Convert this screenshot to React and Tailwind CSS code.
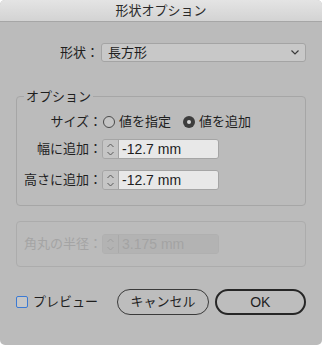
const font = { fontFamily: '"Liberation Sans", "Noto Sans CJK JP", sans-serif' };

const Stepper = ({ disabled }) => (
  <div
    className={`w-[16px] h-full flex items-center justify-center border-r ${
      disabled ? "bg-[#b3b3b3] border-[#a9a9a9]" : "bg-[#c5c5c5] border-[#a3a3a3]"
    }`}
  >
    <svg width="9" height="15" viewBox="0 0 9 15" fill="none">
      <path
        d="M1.5 5 L4.5 2 L7.5 5 M1.5 10 L4.5 13 L7.5 10"
        stroke={disabled ? "#a0a0a0" : "#5a5a5a"}
        strokeWidth="1"
      />
    </svg>
  </div>
);

const NumberField = ({ value, disabled }) => (
  <div
    className={`flex h-[20px] w-[117px] border rounded-[3px] overflow-hidden ${
      disabled ? "border-[#b0b0b0]" : "border-[#a5a5a5]"
    }`}
  >
    <Stepper disabled={disabled} />
    <div
      className={`flex-1 flex items-center pl-[3px] text-[14px] ${
        disabled ? "bg-[#b3b3b3] text-[#a3a3a3]" : "bg-[#e8e8e8] text-[#1e1e1e]"
      }`}
    >
      {value}
    </div>
  </div>
);

const Radio = ({ checked, label }) => (
  <label className="flex items-center gap-[4px]">
    {checked ? (
      <span className="w-[12px] h-[12px] rounded-full bg-[#3d3d3d] flex items-center justify-center">
        <span className="w-[4px] h-[4px] rounded-full bg-[#d6d6d6]" />
      </span>
    ) : (
      <span className="w-[12px] h-[12px] rounded-full border border-[#4a4a4a] bg-[#c4c4c4]" />
    )}
    <span>{label}</span>
  </label>
);

export default function App() {
  return (
    <div
      className="w-[322px] h-[345px] bg-[#bbbbbb] rounded-[5px] overflow-hidden flex flex-col text-[13px] text-[#1f1f1f]"
      style={font}
    >
      {/* タイトルバー */}
      <div className="h-[22px] shrink-0 bg-gradient-to-b from-[#e4e4e4] to-[#d3d3d3] border-b border-[#a6a6a6] flex items-center justify-center text-[13px] text-[#2a2a2a]">
        形状オプション
      </div>

      <div className="px-[16px] flex flex-col">
        {/* 形状 */}
        <div className="flex items-center h-[19px] mt-[21px]">
          <div className="w-[84px] text-right pr-[1px]">形状：</div>
          <div className="flex-1 h-full ml-[1px] bg-[#c8c8c8] border border-[#a4a4a4] rounded-[3px] flex items-center justify-between pl-[6px] pr-[6px]">
            <span>長方形</span>
            <svg width="8" height="5" viewBox="0 0 8 5" fill="none">
              <path d="M0.5 0.5 L4 4 L7.5 0.5" stroke="#3a3a3a" strokeWidth="1.2" />
            </svg>
          </div>
        </div>

        {/* オプション */}
        <div className="relative mt-[34px] h-[110px] border border-[#a6a6a6] rounded-[4px] pt-[16px] pb-[14px]">
          <span className="absolute -top-[10px] left-[7px] px-[2px] bg-[#bbbbbb]">オプション</span>

          <div className="flex items-center h-[18px]">
            <div className="w-[85px] text-right">サイズ：</div>
            <div className="flex items-center gap-[12px] ml-[1px]">
              <Radio label="値を指定" />
              <Radio checked label="値を追加" />
            </div>
          </div>

          <div className="flex items-center h-[20px] mt-[8px]">
            <div className="w-[85px] text-right">幅に追加：</div>
            <NumberField value="-12.7 mm" />
          </div>

          <div className="flex items-center h-[20px] mt-[11px]">
            <div className="w-[85px] text-right">高さに追加：</div>
            <NumberField value="-12.7 mm" />
          </div>
        </div>

        {/* 角丸の半径 (無効) */}
        <div className="mt-[15px] h-[46px] border border-[#acacac] rounded-[4px] flex items-center">
          <div className="w-[85px] text-right text-[#a4a4a4]">角丸の半径：</div>
          <NumberField value="3.175 mm" disabled />
        </div>

        {/* 下部 */}
        <div className="flex items-center mt-[22px] h-[26px]">
          <label className="flex items-center gap-[5px] w-[102px]">
            <span className="w-[12px] h-[12px] border border-[#3c7ad3] rounded-[2px] bg-[#c6c6c6]" />
            <span>プレビュー</span>
          </label>
          <button className="w-[92px] h-[26px] rounded-full border border-[#3a3a3a] bg-[#bdbdbd] flex items-center justify-center text-[13px]">
            キャンセル
          </button>
          <button className="ml-[6px] w-[92px] h-[26px] rounded-full border-2 border-[#262626] bg-[#bdbdbd] flex items-center justify-center text-[14px]">
            OK
          </button>
        </div>
      </div>
    </div>
  );
}
